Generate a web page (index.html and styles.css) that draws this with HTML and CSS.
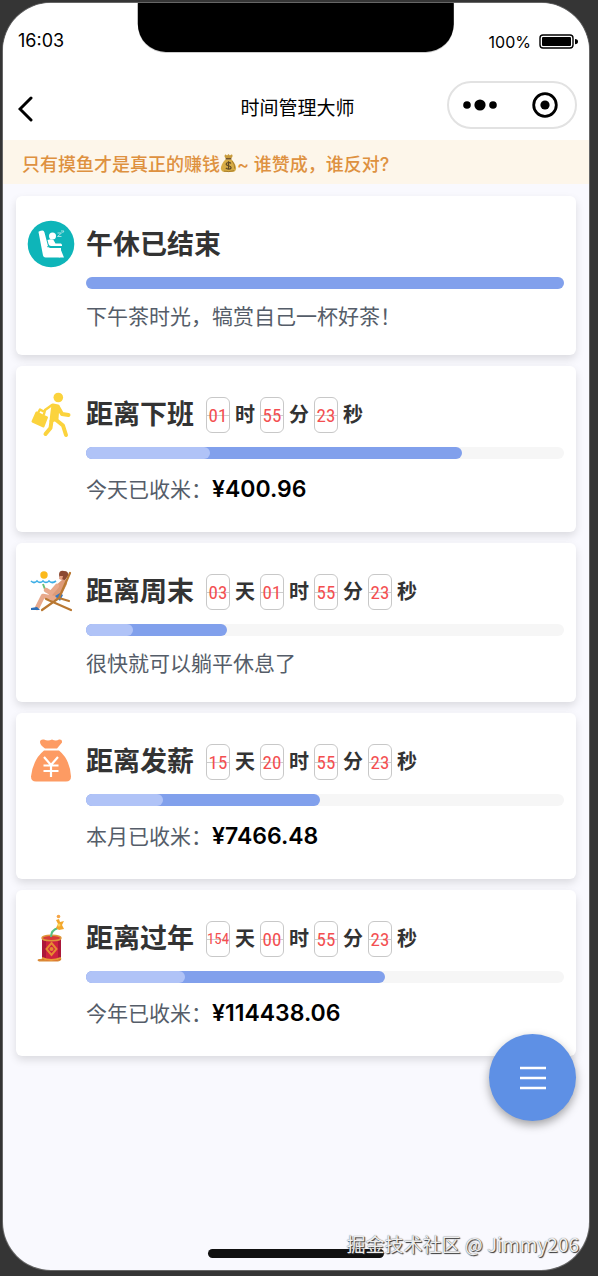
FILE: index.html
```html
<!DOCTYPE html>
<html lang="zh-CN">
<head>
<meta charset="utf-8">
<meta name="viewport" content="width=device-width, initial-scale=1">
<title>时间管理大师</title>
<link rel="stylesheet" href="styles.css">
</head>
<body>
<div class="screen">
  <div class="notch"></div>
  <header>
    <div class="status">
      <span class="clock">16:03</span>
      <span class="power">100%
        <svg width="39" height="16" viewBox="0 0 39 16" aria-hidden="true"><rect x="1" y="1" width="33" height="13" rx="3" fill="none" stroke="#000" stroke-width="1.4"/><rect x="3" y="3" width="29" height="9" rx="1"/><path d="M36 5q3 0 3 2.600t-3 2.600z"/></svg>
      </span>
    </div>
    <nav class="navbar">
      <button class="back" aria-label="返回"><svg width="16" height="26" viewBox="0 0 16 26"><path d="M13 2 2 13l11 11" fill="none" stroke="#000" stroke-width="3" stroke-linecap="round"/></svg></button>
      <h1>时间管理大师</h1>
      <div class="capsule">
        <button aria-label="更多"><svg width="34" height="12" viewBox="0 0 34 12"><circle cx="4" cy="6" r="3.800"/><circle cx="17" cy="6" r="5.600"/><circle cx="30" cy="6" r="3.800"/></svg></button>
        <button aria-label="关闭"><svg width="26" height="26" viewBox="0 0 26 26"><circle cx="13" cy="13" r="11.300" fill="none" stroke="#000" stroke-width="2.800"/><circle cx="13" cy="13" r="4.600"/></svg></button>
      </div>
    </nav>
  </header>
  <p class="notice">只有摸鱼才是真正的赚钱<svg class="bag" width="17" height="20" viewBox="0 0 18 20" role="img" aria-label="钱袋"><path d="M6 5C4 3 5 1 6 1l1.500 1L9 .5l1.500 1.500L12 1c1.500 0 2 2 0 4z" fill="#c89b3c"/><path d="M6 6h6c2 2 5 6 5 9.500 0 3-2 4-4 4H5c-2 0-4-1-4-4C1 12 4 8 6 6z" fill="#d7ac45"/><path d="M4 18.500q5 1.500 11-.5M13 8q3 4 2.500 8" fill="none" stroke="#a67c2e"/><path d="M6 5.500h6" stroke="#725329" stroke-width="1.600"/><path d="M11.500 10.500C10.500 9 6.500 9 6.500 11.200c0 2.200 5.200 1.200 5.200 3.500 0 2.300-4.300 2.300-5.500.5M9 8.200v9" fill="none" stroke="#5f4a25" stroke-width="1.300"/></svg>~ 谁赞成，谁反对?</p>

  <main class="cards">
    <section class="card">
      <svg class="icon" viewBox="0 0 48 48" aria-hidden="true"><circle cx="24" cy="24" r="23.300" fill="#0eb5b9"/><path d="M11.500 12q0-1 4-1.500 1.500 0 2 2L21 26q.5 2 2.500 2H34v7.500q0 2-2 2H18.500q-2 0-2.500-2z" fill="#fff"/><circle cx="25.500" cy="16" r="3.500" fill="#fff"/><path d="M20.500 20q4-1.500 6 0l2 3.500h5.500q1.500 1 1 2.500H24q-2 0-2.500-2z" fill="#fff"/><path d="M20 26.700h15" stroke="#0eb5b9" stroke-width=".8"/><path d="M32.500 29l3 7.500h-3" fill="none" stroke="#fff" stroke-width="2" stroke-linecap="round"/><path d="M30.500 13h4l-4 3.500h4M34 11h3l-1.500 2" fill="none" stroke="#a5e0e2"/></svg>
      <div class="body">
        <div class="head"><h2>午休已结束</h2></div>
        <div class="track"><div class="fill" style="width:100%"></div></div>
        <p class="note">下午茶时光，犒赏自己一杯好茶！</p>
      </div>
    </section>

    <section class="card">
      <svg class="icon" viewBox="0 0 48 48" aria-hidden="true"><circle cx="31.300" cy="7.500" r="4.800" fill="#fbd33d"/><path d="m9.500 22.500 10.500 5-3.500 9-11-5z" fill="#fbd33d" stroke="#fbd33d" stroke-width="2" stroke-linejoin="round"/><path d="m11 23 2-3.500 4.500 2.500M25 15l-7 5-1 4" fill="none" stroke="#fbd33d" stroke-width="2.500" stroke-linecap="round" stroke-linejoin="round"/><path d="m26 15 5 1-1 13-6 2 1-9z" fill="#fbd33d" stroke="#fbd33d" stroke-width="3" stroke-linejoin="round"/><path d="m31 17 4 7 6.500 1M24.500 31l-1 7-5 6M28 29l8 6.500 3 9.500" fill="none" stroke="#fbd33d" stroke-width="4" stroke-linecap="round" stroke-linejoin="round"/></svg>
      <div class="body">
        <div class="head"><h2>距离下班</h2><div class="timer"><b>01</b><span>时</span><b>55</b><span>分</span><b>23</b><span>秒</span></div></div>
        <div class="track"><div class="fill" style="width:78.700%"><i class="glow"></i></div></div>
        <p class="note earn">今天已收米：<strong>¥400.96</strong></p>
      </div>
    </section>

    <section class="card">
      <svg class="icon" viewBox="0 0 48 48" aria-hidden="true"><circle cx="17" cy="8" r="3.700" fill="#fbb91c"/><path d="M4 14q3 3 6 0 3 3 6 0 3 3 6 0 3 3 7 0" fill="none" stroke="#3caee6" stroke-width="1.700"/><path d="M16 17l3 8" stroke="#69bf75" stroke-width="2"/><path d="M36 12q5 0 4 5l-7 14-8 3-4-5 5-8z" fill="#dd9a78"/><path d="M30 19l-6 7-5-3M27 31l-11-2-6 12" fill="none" stroke="#e8a98b" stroke-width="4.500" stroke-linejoin="round" stroke-linecap="round"/><path d="M32 8q0-5 5-4 5 0 4 5l-3 4-5-1z" fill="#8c4932"/><path d="M33 9h3l-1 4-3-1z" fill="#e7a083"/><path d="m28 29 5-3 3 2-3 6z" fill="#3578c5"/><path d="M43 6 32 31 15 43M19 32l25 11M32 31l10 3" fill="none" stroke="#b97832" stroke-width="2.200" stroke-linecap="round"/><path d="M4 41l6-1 3 3H4z" fill="#2d6fb8"/></svg>
      <div class="body">
        <div class="head"><h2>距离周末</h2><div class="timer"><b>03</b><span>天</span><b>01</b><span>时</span><b>55</b><span>分</span><b>23</b><span>秒</span></div></div>
        <div class="track"><div class="fill" style="width:29.500%"><i class="glow"></i></div></div>
        <p class="note">很快就可以躺平休息了</p>
      </div>
    </section>

    <section class="card">
      <svg class="icon" viewBox="0 0 48 48" aria-hidden="true"><path d="M13 5q0-3 4-2.500 4 2 8 0 4 2 7 0 3.500-.5 3 3l-5 6H18q-5-3.500-5-6.500zM17 13.500h15q11 9 12 26 0 5-5 5H9q-5 0-5-5 2-17 13-26z" fill="#fd9b63"/><path d="m17 20 7 8 7-8M24 28v12M16.500 28.500h15M16.500 34h15" fill="none" stroke="#fff" stroke-width="2.200"/></svg>
      <div class="body">
        <div class="head"><h2>距离发薪</h2><div class="timer"><b>15</b><span>天</span><b>20</b><span>时</span><b>55</b><span>分</span><b>23</b><span>秒</span></div></div>
        <div class="track"><div class="fill" style="width:49%"><i class="glow"></i></div></div>
        <p class="note earn">本月已收米：<strong>¥7466.48</strong></p>
      </div>
    </section>

    <section class="card">
      <svg class="icon" viewBox="0 0 48 48" aria-hidden="true"><path d="M12 45q-3 1 0 2.500h19q4-1 3-3z" fill="#d98935"/><path d="M15 24h19v21q-9 4-19 0z" fill="#cf2141"/><path d="M15 24h4v22l-4-1zM31 24h3v21l-3 1z" fill="#ab183a"/><ellipse cx="24.500" cy="24" rx="9.500" ry="2.800" fill="#d63a39" stroke="#df963a" stroke-width="1.500"/><path d="M15 44q9 4 19 0" fill="none" stroke="#e79c35" stroke-width="2"/><path d="m24.500 29 5 6-5 6-5-6z" fill="none" stroke="#e68b31" stroke-width="2"/><circle cx="24.500" cy="35" r="2" fill="#e68b31"/><path d="M24 23q0-7 7-9" fill="none" stroke="#55bf82" stroke-width="2"/><path d="m29 6 3-1 1 3 4-1-2 4 2 4-5 1-3-2 2-4z" fill="#f3a72d"/><circle cx="31.500" cy="2.500" r="1.800" fill="#f5a548"/><circle cx="32" cy="11" r="1.500" fill="#fbd657"/></svg>
      <div class="body">
        <div class="head"><h2>距离过年</h2><div class="timer"><b class="long">154</b><span>天</span><b>00</b><span>时</span><b>55</b><span>分</span><b>23</b><span>秒</span></div></div>
        <div class="track"><div class="fill" style="width:62.500%"><i class="glow"></i></div></div>
        <p class="note earn">今年已收米：<strong>¥114438.06</strong></p>
      </div>
    </section>
  </main>

  <button class="fab" aria-label="菜单"><svg width="26" height="24" viewBox="0 0 26 24"><path d="M0 2h26M0 12h26M0 22h26" stroke="#fff" stroke-width="2.400"/></svg></button>
  <div class="home"></div>
  <div class="watermark">掘金技术社区 @ Jimmy206</div>
</div>
</body>
</html>
```
FILE: styles.css
```css
* { box-sizing: border-box; }
body {
  margin: 0;
  padding: 3px 9px 6px 3px;
  background: #353535;
  font-family: Inter, "Noto Sans CJK SC", sans-serif;
  color: #000;
}
h1, h2, p { margin: 0; }
button {
  display: flex;
  align-items: center;
  justify-content: center;
  padding: 0;
  border: 0;
  background: none;
}
svg { display: block; flex: none; }

.screen {
  position: relative;
  display: flex;
  flex-direction: column;
  min-height: calc(100vh - 9px);
  border-radius: 48px;
  background: #f9f9fe;
  box-shadow: 0 0 0 1px #666;
  overflow: hidden;
}
.notch {
  position: absolute;
  top: 0;
  left: 50%;
  width: 54%;
  height: 49px;
  transform: translateX(-50%);
  border-radius: 0 0 28px 28px;
  background: #000;
  box-shadow: 0 1px 0 #ccc;
}
header { background: #fff; }
.status {
  display: flex;
  align-items: center;
  justify-content: space-between;
  height: 74px;
  padding: 0 11px 0 15px;
}
.clock { font-size: 18px; }
.power {
  display: flex;
  align-items: center;
  gap: 8px;
  padding-top: 4px;
  font-size: 16px;
}
.navbar {
  display: grid;
  grid-template-columns: 1fr auto 1fr;
  align-items: center;
  height: 63px;
  padding: 0 12px 7px 15px;
}
.back { justify-self: start; margin-top: 8px; }
.navbar h1 {
  margin-top: 8px;
  font-size: 19px;
  font-weight: 400;
  line-height: 28px;
}
.capsule {
  display: flex;
  align-items: center;
  justify-content: space-between;
  justify-self: end;
  width: 130px;
  height: 48px;
  padding: 0 17px 0 14px;
  border: 2px solid #e2e2e2;
  border-radius: 24px;
}
.notice {
  display: flex;
  align-items: center;
  height: 44px;
  padding: 2px 19px 0;
  background: #fdf6ea;
  color: #de9140;
  font-size: 18px;
  font-weight: 500;
  white-space: pre;
}

.cards {
  display: grid;
  gap: 11px;
  padding: 12px 13px;
}
.card {
  display: flex;
  gap: 11px;
  padding: 30px 12px 24px 11px;
  border-radius: 6px;
  background: #fff;
  box-shadow: 0 4px 8px rgba(0, 0, 0, .12);
}
.icon { width: 48px; height: 48px; margin-top: -6px; }
.body { flex: 1; min-width: 0; }
.head {
  display: flex;
  align-items: center;
  gap: 12px;
  height: 38px;
}
h2 {
  color: #333;
  font-size: 27px;
  font-weight: 700;
  line-height: 38px;
}
.timer {
  display: flex;
  align-items: center;
  gap: 5px;
}
.timer span {
  color: #333;
  font-size: 20px;
  font-weight: 700;
  line-height: 36px;
}
.timer b {
  display: flex;
  align-items: center;
  justify-content: center;
  width: 24px;
  height: 36px;
  border: 1px solid #c8c8c8;
  border-radius: 6px;
  background: linear-gradient(#ccc, #ccc) center / 100% 1px no-repeat;
  color: #f34f51;
  font-family: "Roboto Condensed", "Liberation Sans Narrow", sans-serif;
  font-size: 19px;
  font-weight: 400;
}
.timer .long { font-size: 15px; }
.track {
  height: 12px;
  margin-top: 13px;
  border-radius: 6px;
  background: #f6f6f6;
}
.fill {
  height: 12px;
  border-radius: 6px;
  background: #81a0ec;
}
.glow {
  display: block;
  width: 33%;
  height: 12px;
  border-radius: 6px;
  background: #b0c3f7;
}
.note {
  margin-top: 13px;
  color: #555d69;
  font-size: 21px;
  line-height: 29px;
}
.earn { line-height: 36px; }
.note strong {
  color: #000;
  font-size: 23px;
  font-weight: 600;
  line-height: 1;
}

.fab {
  position: absolute;
  right: 13px;
  bottom: 149px;
  width: 87px;
  height: 87px;
  border-radius: 50%;
  background: #5e90e5;
  box-shadow: 0 4px 10px rgba(0, 0, 0, .35);
}
.home {
  align-self: center;
  width: 30%;
  height: 9px;
  margin: auto 0 12px;
  border-radius: 5px;
  background: #111;
}
.watermark {
  position: absolute;
  right: 10px;
  bottom: 12px;
  color: #eee;
  font-family: "Noto Sans CJK SC", sans-serif;
  font-size: 19px;
  line-height: 28px;
  text-shadow: 1px 1px 1px #333, 0 0 1px #666;
}
```
